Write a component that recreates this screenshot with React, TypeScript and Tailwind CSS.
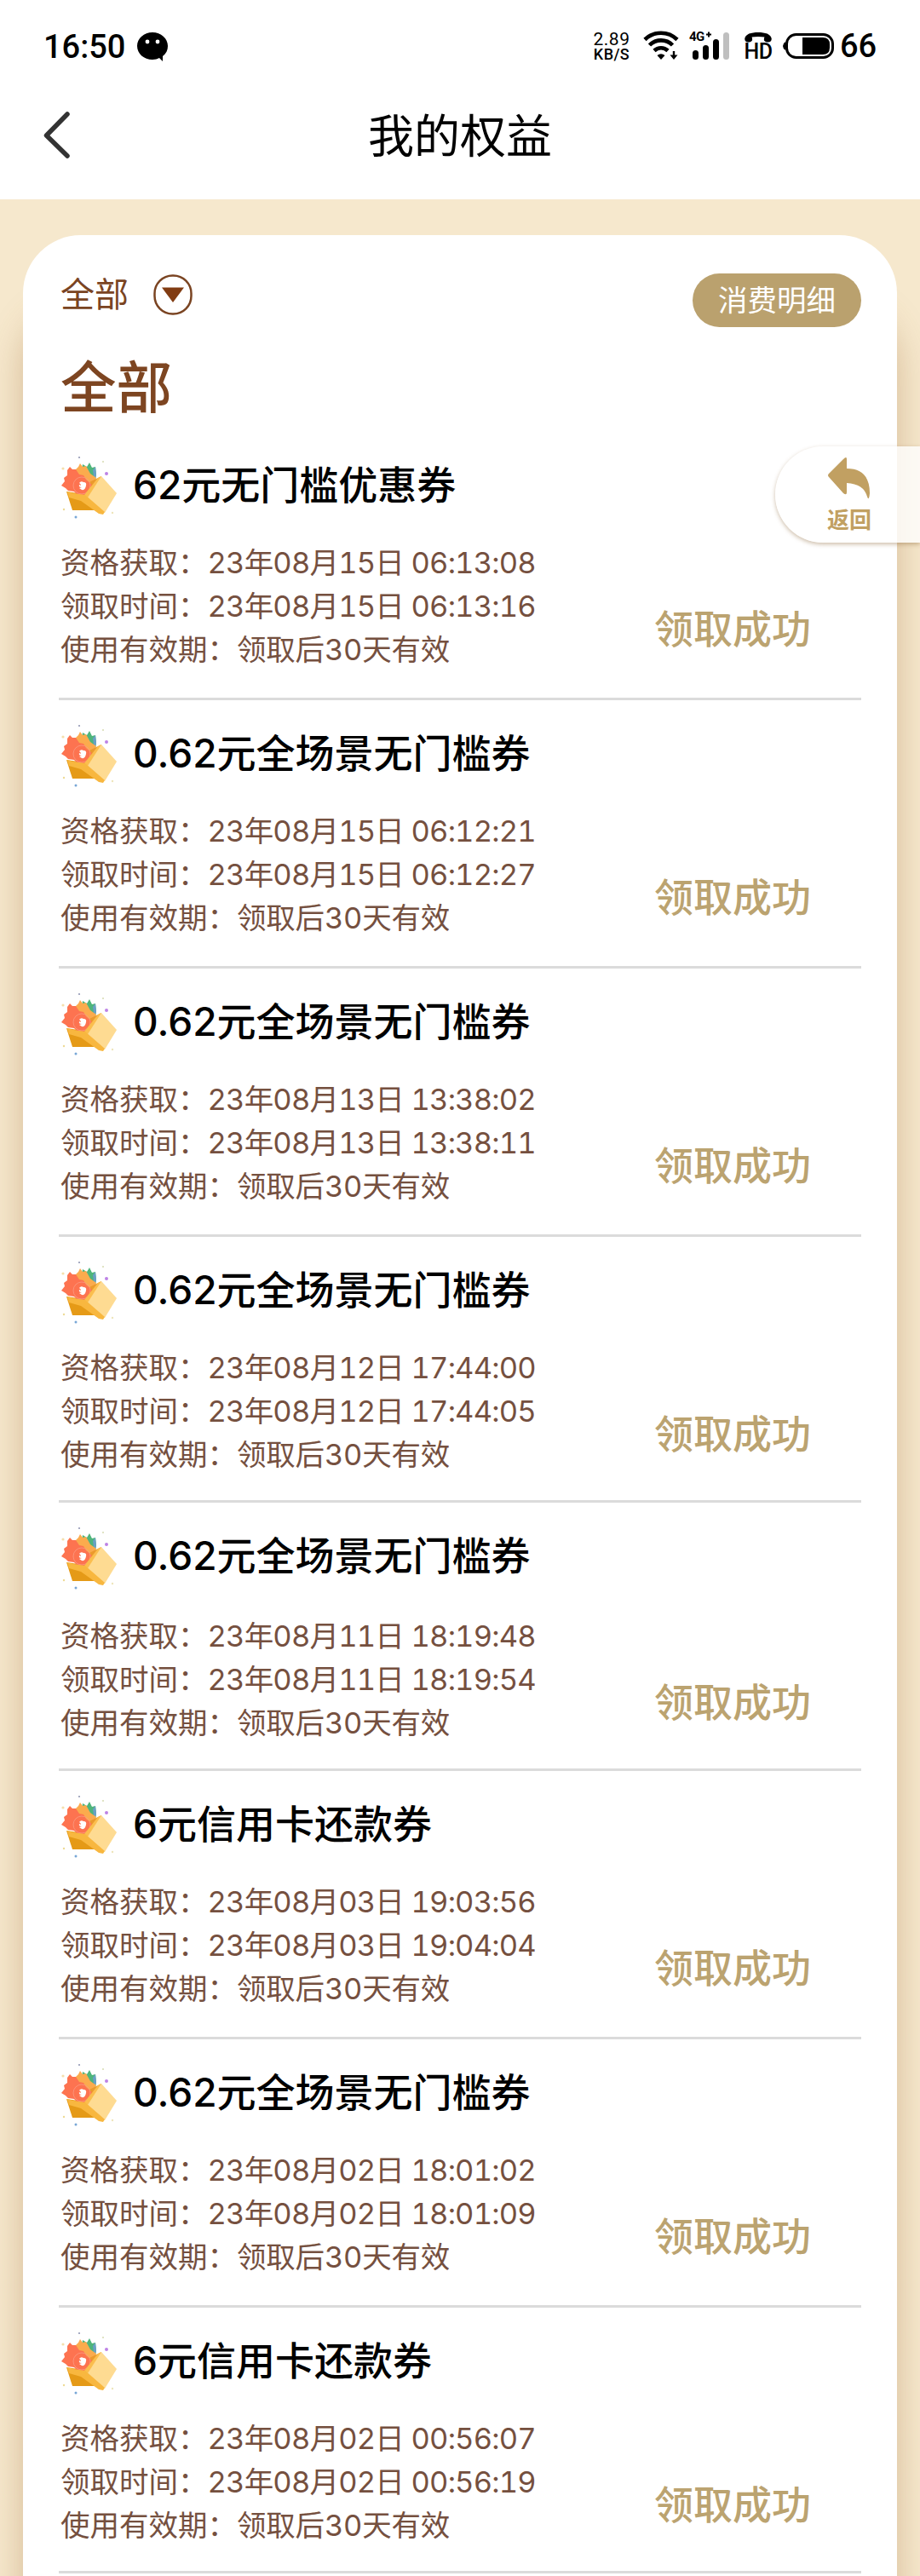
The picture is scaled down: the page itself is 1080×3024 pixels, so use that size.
import React from 'react';

interface Coupon {
  title: string;
  qualified: string;
  received: string;
  height: string;
  bodyOffset: string;
}

const coupons: Coupon[] = [
  { title: '62元无门槛优惠券', qualified: '23年08月15日 06:13:08', received: '23年08月15日 06:13:16', height: 'h-[315px]', bodyOffset: 'pt-[14px]' },
  { title: '0.62元全场景无门槛券', qualified: '23年08月15日 06:12:21', received: '23年08月15日 06:12:27', height: 'h-[315px]', bodyOffset: 'pt-[14px]' },
  { title: '0.62元全场景无门槛券', qualified: '23年08月13日 13:38:02', received: '23年08月13日 13:38:11', height: 'h-[315px]', bodyOffset: 'pt-[14px]' },
  { title: '0.62元全场景无门槛券', qualified: '23年08月12日 17:44:00', received: '23年08月12日 17:44:05', height: 'h-[312px]', bodyOffset: 'pt-[14px]' },
  { title: '0.62元全场景无门槛券', qualified: '23年08月11日 18:19:48', received: '23年08月11日 18:19:54', height: 'h-[315px]', bodyOffset: 'pt-[17px]' },
  { title: '6元信用卡还款券', qualified: '23年08月03日 19:03:56', received: '23年08月03日 19:04:04', height: 'h-[315px]', bodyOffset: 'pt-[14px]' },
  { title: '0.62元全场景无门槛券', qualified: '23年08月02日 18:01:02', received: '23年08月02日 18:01:09', height: 'h-[315px]', bodyOffset: 'pt-[14px]' },
  { title: '6元信用卡还款券', qualified: '23年08月02日 00:56:07', received: '23年08月02日 00:56:19', height: 'h-[312px]', bodyOffset: 'pt-[14px]' },
];

const GiftIcon = () => (
  <svg viewBox="0 0 100 100" className="h-[100px] w-[100px] shrink-0">
    <path d="M37 33 38 26 43 29 46 24 49 30 53 29 54 38 53 45 44 50Z" fill="#4fb57b" />
    <path d="M50 33 53 29 54 38 53 43 51 40Z" fill="#6a9fc6" />
    <path d="M29 33 33 29 35 25 38 29 42 28 47 37 54 42 45 56Z" fill="#fbab4d" />
    <path d="M19 58 60 64 58 80 26 80Z" fill="#e59a17" />
    <path d="M46 47 60 40 46 64 38 62Z" fill="#eb9a2c" />
    <path d="M23 29 26 32 30 32 34 38 39 39 42 44 49 50 40 62 33 63 28 58 21 57 18 54 13 51 17 46 16 42 20 39 20 33Z" fill="#fd7350" />
    <circle cx="37" cy="51" r="10" fill="none" stroke="#fa9b83" strokeWidth="0.8" />
    <path d="M34 48q2-3 5-1 4 0 3 4-1 6-5 5l-3-2 3-1q-4 0-3-3l2 1q0-2-2-3Z" fill="#fff" />
    <path d="M60 40 78 60 64 83 43 66 40 63Z" fill="#fedb92" />
    <path d="M60 40 56 42 40 62 44 65Z" fill="#fbbe4e" />
    <path d="M20 58 27 60 41 62 64 82 62 85 57 84 36 69 22 65Z" fill="#f8b73f" />
    <circle cx="66" cy="37" r="2" fill="#bd83e6" />
    <circle cx="34" cy="18" r="1.1" fill="#9298b4" />
    <circle cx="62" cy="23" r="1.1" fill="#d9ddb6" />
    <circle cx="15" cy="31" r="1.6" fill="#f5dfac" />
    <circle cx="16" cy="79" r="1.2" fill="#eedb96" />
    <circle cx="73" cy="83" r="1.2" fill="#eee5bb" />
    <circle cx="30" cy="88" r="1.5" fill="#78a7d6" />
  </svg>
);

const StatusBar = () => (
  <div className="flex h-[108px] items-start pt-[36px] pr-[51px] pl-[51px]">
    <div className="mt-[-3px] text-[38px] leading-[44px] font-medium font-['Roboto','Noto_Sans_CJK_SC',sans-serif]">16:50</div>
    <svg viewBox="0 0 38 36" className="mt-px ml-[13px] h-[36px] w-[38px]">
      <path d="M19 1C9 1 1 8 1 17s8 16 18 16c3 0 6-1 8-2l4 4v-6c4-3 6-7 6-12C37 8 29 1 19 1Z" fill="#000" />
      <circle cx="13" cy="12" r="2.4" fill="#fff" />
      <circle cx="25" cy="12" r="2.4" fill="#fff" />
    </svg>
    <div className="ml-auto flex items-start">
      <div className="w-[44px] text-center font-['Roboto','Noto_Sans_CJK_SC',sans-serif]">
        <div className="text-[21px] leading-[20px] tracking-[0.5px]">2.89</div>
        <div className="text-[18px] leading-[16px] font-medium tracking-[0.4px]">KB/S</div>
      </div>
      <svg viewBox="0 0 42 35" className="ml-[15px] h-[35px] w-[42px]" fill="none" stroke="#000" strokeWidth="4.6">
        <path d="M2 10.5a27 27 0 0 1 38 0" />
        <path d="M7.5 17a19 19 0 0 1 27 0" />
        <path d="M13 23.5a11.5 11.5 0 0 1 16 0" />
        <path d="M16.5 29q4.500-3.500 9 0l-4.500 5Z" fill="#000" stroke="none" />
        <path d="M36 24v8" strokeWidth="2.4" />
        <path d="M31.5 28.5h9L36 34Z" fill="#000" stroke="none" />
      </svg>
      <div className="relative ml-[12px] h-[34px] w-[48px]">
        <span className="absolute top-[-3px] left-0 text-[15px] leading-[20px] font-bold tracking-[-0.5px] font-['Roboto','Noto_Sans_CJK_SC',sans-serif]">4G</span>
        <svg viewBox="0 0 48 34" className="h-[34px] w-[48px]">
          <path d="M20 4.500h6M23 1.500v6" stroke="#000" strokeWidth="2" />
          <rect x="4" y="23" width="7" height="11" rx="3.5" />
          <rect x="16" y="17" width="7" height="17" rx="3.5" />
          <rect x="28" y="10" width="7" height="24" rx="3.5" />
          <rect x="40" y="2" width="7" height="32" rx="3.5" fill="#bfbfbf" />
        </svg>
      </div>
      <div className="ml-[16px] flex h-[38px] w-[34px] flex-col items-center">
        <svg viewBox="0 0 34 14" className="mt-[2px] h-[13px] w-[34px] shrink-0">
          <path d="M0 8C1 2 8 0 17 0s16 2 17 8c0 4-3 5-7 4-3-1-3-3-2-6-5-1-11-1-16 0 1 3 1 5-2 6-4 1-7 0-7-4Z" />
        </svg>
        <span className="mt-[-4px] text-[25px] leading-[27px] font-medium tracking-[-0.5px] font-['Roboto','Noto_Sans_CJK_SC',sans-serif]">HD</span>
      </div>
      <svg viewBox="0 0 60 32" className="mt-[2px] ml-[12px] h-[32px] w-[60px]">
        <rect x="4.5" y="2.5" width="54" height="27" rx="11" fill="none" stroke="#000" strokeWidth="3" />
        <path d="M3 11v10Q0 19 0 16t3-5Z" />
        <path d="M23 6h24q8 0 8 8v4q0 8-8 8H23Z" />
      </svg>
      <div className="mt-[-4px] ml-[7px] w-[43px] text-[38px] leading-[44px] font-medium font-['Roboto','Noto_Sans_CJK_SC',sans-serif]">66</div>
    </div>
  </div>
);

const NavBar = () => (
  <div className="grid h-[126px] grid-cols-3 items-start">
    <svg viewBox="0 0 32 58" className="mt-[22px] ml-[51px] h-[58px] w-[32px]">
      <path d="M28 4 3.500 29 28 53" fill="none" stroke="#333" strokeWidth="5.5" strokeLinecap="round" strokeLinejoin="round" />
    </svg>
    <h1 className="mt-[10px] text-center text-[54px] leading-[78px] text-black font-['Noto_Sans_CJK_SC',sans-serif]">我的权益</h1>
  </div>
);

const CouponRow = ({ coupon }: { coupon: Coupon }) => (
  <li className={`border-b-[3px] border-[#dbdbdb] ${coupon.height}`}>
    <div className="flex h-[114px] items-end">
      <div className="mb-[2px] ml-[-10px] flex w-[98px]">
        <GiftIcon />
      </div>
      <h3 className="mb-[22px] ml-[-1px] text-[46px] leading-[60px] font-medium text-black">{coupon.title}</h3>
    </div>
    <div className={`flex justify-between pl-[2px] ${coupon.bodyOffset}`}>
      <div className="text-[34.5px] leading-[51px] text-[#75503f] tabular-nums">
        <p>资格获取：<span className="tracking-[-0.8px]">{coupon.qualified}</span></p>
        <p>领取时间：<span className="tracking-[-0.8px]">{coupon.received}</span></p>
        <p>使用有效期：<span className="tracking-[-0.2px]">领取后30天有效</span></p>
      </div>
      <div className="mt-[73px] mr-[59px] text-[46px] leading-[60px] font-medium text-[#bba370]">领取成功</div>
    </div>
  </li>
);

const App: React.FC = () => {
  return (
    <div className="relative h-[3024px] w-[1080px] overflow-hidden bg-[#f6e8cd] font-['Inter','Noto_Sans_CJK_SC',sans-serif]">
      <header className="bg-white">
        <StatusBar />
        <NavBar />
      </header>

      <main className="mx-[27px] mt-[42px] h-[2900px] rounded-[68px] bg-white px-[42px] shadow-[0_86px_40px_rgba(160,110,60,0.38)]">
        <div className="flex items-start justify-between pt-[45px]">
          <div className="flex items-center pl-[2px]">
            <span className="text-[40px] leading-[50px] text-[#7a4422]">全部</span>
            <svg viewBox="0 0 46 48" className="ml-[29px] h-[48px] w-[46px]">
              <rect x="1.5" y="1.5" width="43" height="45" rx="21" fill="none" stroke="#7a4422" strokeWidth="2.5" />
              <path d="M10 15.500h26L23 33Z" fill="#813c12" />
            </svg>
          </div>
          <button className="h-[63px] w-[198px] rounded-full bg-[#baa16e] text-[34.5px] leading-[60px] text-white">消费明细</button>
        </div>

        <h2 className="mt-[26px] pl-[2px] text-[65.5px] leading-[92px] font-medium text-[#7d4521]">全部</h2>

        <ul className="mt-[5px]">
          {coupons.map((coupon, index) => (
            <CouponRow key={index} coupon={coupon} />
          ))}
        </ul>
      </main>

      {/* Floating return button */}
      <button className="absolute top-[524px] right-0 flex h-[113px] w-[170px] flex-col items-start rounded-l-full bg-white/80 pl-[62px] text-[#c1a062] shadow-[0_2px_5px_rgba(130,90,40,0.4)]">
        <svg viewBox="0 0 50 50" className="mt-[12px] h-[50px] w-[50px]">
          <path d="M18 3q4-4 4 0v11q27 0 27 29q-1 10-3 4-4-15-24-16v11q0 4-4 1L1 24q-2-2 0-4Z" fill="currentColor" />
        </svg>
        <span className="mt-[6px] ml-[-1px] text-[26px] leading-[38px] font-bold">返回</span>
      </button>
    </div>
  );
};

export default App;
